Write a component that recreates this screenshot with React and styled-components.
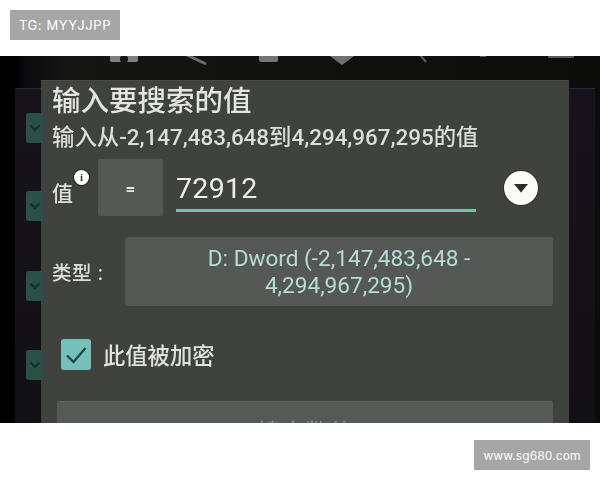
import React from "react";
import styled, { createGlobalStyle } from "styled-components";

const Global = createGlobalStyle`
  html, body { margin: 0; padding: 0; background: #fff; }
  body { font-family: "Roboto", "Noto Sans CJK SC", sans-serif; }
`;
const Page = styled.div`
  width: 600px; height: 480px; background: #fff; display: flex; flex-direction: column; overflow: hidden;
`;
const TopBand = styled.div`
  height: 56px; flex: none; box-sizing: border-box; padding: 10px; display: flex; align-items: flex-start;
`;
const BottomBand = styled.div`
  flex: 1; box-sizing: border-box; padding: 17px 10px 0; display: flex; justify-content: flex-end; align-items: flex-start;
`;
const Stamp = styled.div`
  width: ${(p) => p.$w}px; height: 30px; background: #a6a6a6; color: #fff; display: flex; align-items: center; justify-content: center;
  font-family: "Inter", "Liberation Sans", sans-serif; font-size: ${(p) => p.$fs}px; letter-spacing: ${(p) => p.$ls}px; white-space: nowrap;
`;
const Shot = styled.div`
  position: relative; height: 367px; flex: none; overflow: hidden;
  background: linear-gradient(90deg, #000 0, #000 15px, #0c0b0e 26px, #151513 70px, #0c0c0b 100%);
  display: flex; flex-direction: column; filter: blur(0.55px);
`;
const Toolbar = styled.div`
  height: 24px; flex: none; display: block;
  svg { display: block; }
`;
const Body = styled.div`
  flex: 1; min-height: 0; display: grid; grid-template-columns: 15px 26px 528px 26px 5px;
`;
const SidePanel = styled.div`
  grid-column: ${(p) => p.$col}; margin-top: 8px;
  background: linear-gradient(180deg, #17131b, #111014);
  border-top: 1px solid #2c2a2e;
`;
const Dialog = styled.div`
  grid-column: 3; position: relative; z-index: 2; box-sizing: border-box; background: #3f423d; border-top: 1px solid #4a4c48;
  padding: 4px 16px 0 11px; color: #dfe1dc; display: flex; flex-direction: column;
`;
const Title = styled.div`
  font-size: 28.5px; line-height: 34px; font-weight: 500; color: #e4e5e1; white-space: nowrap;
`;
const Subtitle = styled.div`
  font-size: 22.4px; line-height: 26px; margin-top: 5px; font-weight: 500; color: #dcdedb; white-space: nowrap;
`;
const ValueRow = styled.div`
  display: grid; grid-template-columns: 46px 65px 1fr 77px; align-items: start; margin-top: 9px; height: 58px;
`;
const ValueLabel = styled.div`
  position: relative; font-size: 21px; line-height: 28px; margin-top: 21px; font-weight: 500; color: #e0e1dd;
`;
const InfoBadge = styled.span`
  position: absolute; left: 22px; top: -10px; width: 15px; height: 15px; border-radius: 50%; background: #fff; color: #3a3c38;
  font: 700 11px/15px "Liberation Serif", serif; text-align: center; box-shadow: 0 0 0 1px #222;
`;
const OpButton = styled.div`
  height: 57px; background: #555854; border-radius: 2px; display: flex; align-items: center; justify-content: center;
  color: #e6e7e4; font-size: 17px; font-weight: 700; padding-top: 2px; box-sizing: border-box;
`;
const InputWrap = styled.div`
  margin-left: 13px; height: 53px; box-sizing: border-box; border-bottom: 3px solid #7cbdb2;
  font-size: 28.5px; line-height: 59px; color: #eceeea; letter-spacing: 0.3px;
`;
const ArrowCell = styled.div`
  display: flex; justify-content: flex-end; padding: 12px 15px 0 0;
`;
const ArrowCircle = styled.div`
  width: 34px; height: 34px; border-radius: 50%; background: #fafbf8; display: flex; align-items: center; justify-content: center;
  box-shadow: 0 0 0 1px #1c1c1c66;
`;
const TypeRow = styled.div`
  display: grid; grid-template-columns: 73px 1fr; align-items: center; margin-top: 20px;
`;
const TypeLabel = styled.div`
  font-size: 19.5px; letter-spacing: 0.6px; font-weight: 500; color: #dcdeda;
`;
const TypeSelect = styled.div`
  height: 69px; background: #555854; border-radius: 3px; color: #b4dcd8; font-size: 22.6px; line-height: 27px; text-align: center;
  box-sizing: border-box; padding: 8px 6px 0; white-space: nowrap;
`;
const CheckRow = styled.div`
  display: flex; align-items: flex-start; gap: 12px; margin: 33px 0 0 9px;
`;
const CheckBox = styled.div`
  width: 30px; height: 31px; border-radius: 3px; background: #75c0ba; display: flex; align-items: center; justify-content: center;
`;
const CheckLabel = styled.div`
  font-size: 22.3px; line-height: 31px; padding-top: 2px; font-weight: 500; color: #e2e3df;
`;
const Submit = styled.div`
  margin: 29px 0 0 5px; height: 70px; background: #555a56; border-radius: 2px; border-top: 1px solid #5d615d; color: #8a8e89;
  font-size: 24px; line-height: 62px; text-align: center; box-sizing: border-box;
`;
const PeekTab = styled.div`
  position: absolute; left: 26px; top: ${(p) => p.$top}px; width: 17px; height: 30px; border-radius: 3px 0 0 3px; background: #2b5048;
  display: flex; align-items: center; justify-content: center; z-index: 3;
  box-sizing: border-box;
`;

const Peek = ({ top }) => (
  <PeekTab $top={top}>
    <svg width="12" height="8" viewBox="0 0 12 8"><path d="M1.5 1.5 6 6l4.5-4.5" fill="none" stroke="#14302b" strokeWidth="2" /></svg>
  </PeekTab>
);

export default function App() {
  return (
    <Page>
      <Global />
      <TopBand><Stamp $w={110} $fs={13} $ls={0.6}>TG: MYYJJPP</Stamp></TopBand>
      <Shot>
        <Toolbar>
          <svg width="600" height="24" viewBox="0 0 600 24">
            <rect x="110" y="-8" width="28" height="10" rx="2" fill="#7f7f7d" transform="translate(0 4)" />
            <circle cx="124" cy="3" r="4" fill="#161616" />
            <path d="M185 -2 L206 8" stroke="#6d6d6b" strokeWidth="3" />
            <rect x="259" y="-8" width="19" height="14" rx="2" fill="#767674" />
            <path d="M327 -2 h30 l-15 11z" fill="#6f6f6d" />
            <path d="M420 -1 l6 7" stroke="#5f5f5d" strokeWidth="2" />
            <rect x="480" y="-4" width="6" height="5" fill="#5f5f5d" />
            <rect x="548" y="-6" width="26" height="8" rx="1" fill="#5a5a58" />
          </svg>
        </Toolbar>
        <Body>
          <SidePanel $col={2} />
          <Dialog>
            <Title>输入要搜索的值</Title>
            <Subtitle>输入从-2,147,483,648到4,294,967,295的值</Subtitle>
            <ValueRow>
              <ValueLabel>值<InfoBadge>i</InfoBadge></ValueLabel>
              <OpButton>=</OpButton>
              <InputWrap>72912</InputWrap>
              <ArrowCell>
                <ArrowCircle>
                  <svg width="16" height="10" viewBox="0 0 16 10"><path d="M1 1h14L8 9.5z" fill="#2b2d2a" /></svg>
                </ArrowCircle>
              </ArrowCell>
            </ValueRow>
            <TypeRow>
              <TypeLabel>类型 :</TypeLabel>
              <TypeSelect>D: Dword (-2,147,483,648 -<br />4,294,967,295)</TypeSelect>
            </TypeRow>
            <CheckRow>
              <CheckBox>
                <svg width="24" height="20" viewBox="0 0 24 20"><path d="M3 10.5 9.5 17 21.5 3" fill="none" stroke="#1c4a45" strokeWidth="2.4" /></svg>
              </CheckBox>
              <CheckLabel>此值被加密</CheckLabel>
            </CheckRow>
            <Submit>搜索数值</Submit>
          </Dialog>
          <SidePanel $col={4} />
        </Body>
        <Peek top={57} />
        <Peek top={135} />
        <Peek top={215} />
        <Peek top={294} />
      </Shot>
      <BottomBand><Stamp $w={116} $fs={12} $ls={0.1}>www.sg680.com</Stamp></BottomBand>
    </Page>
  );
}
